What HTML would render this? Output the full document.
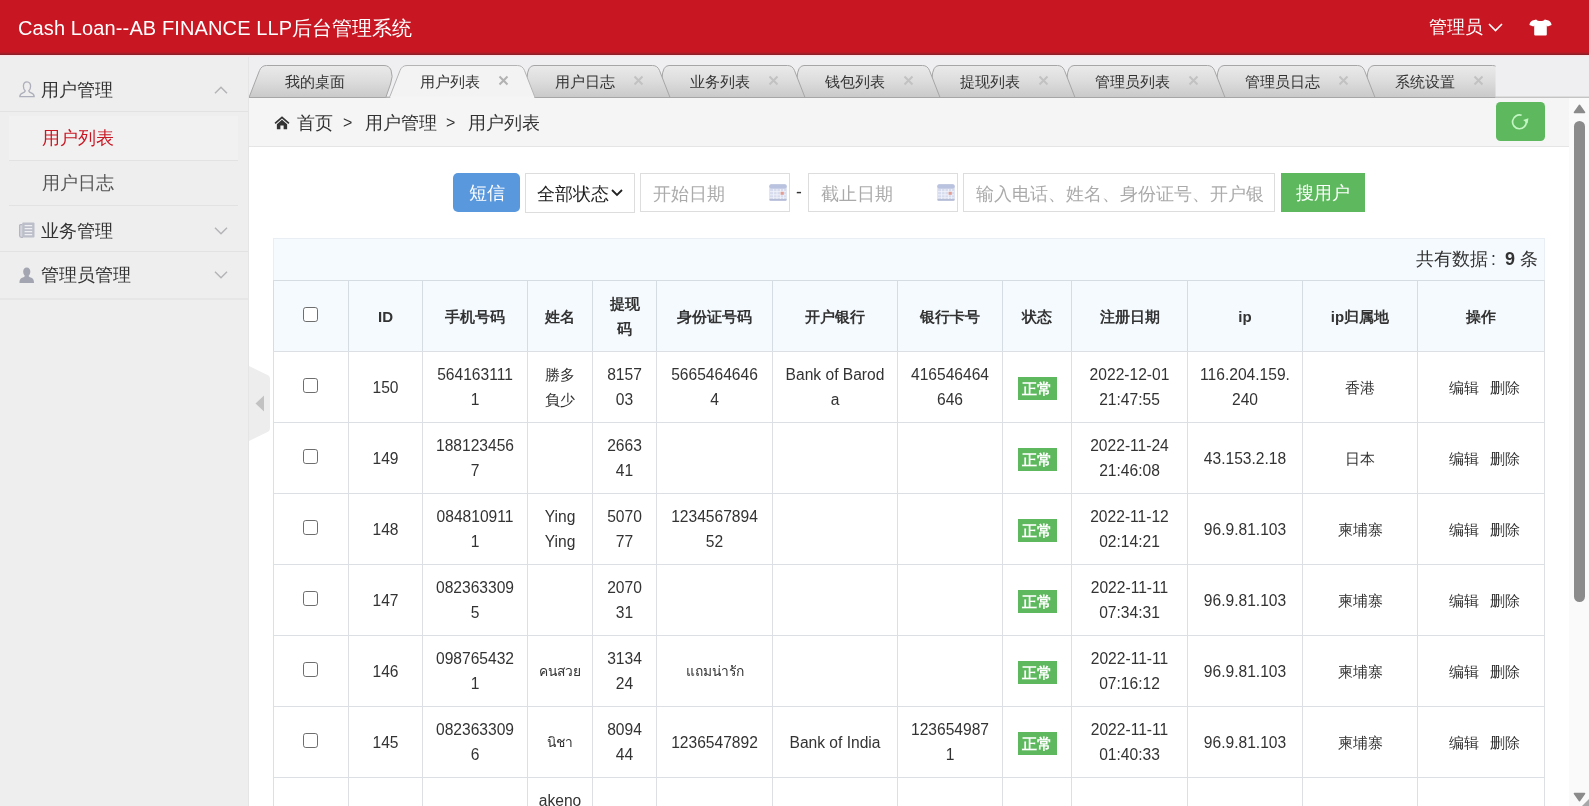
<!DOCTYPE html>
<html lang="zh">
<head>
<meta charset="utf-8">
<title>Cash Loan</title>
<style>
*{box-sizing:border-box;margin:0;padding:0}
html,body{width:1589px;height:806px;overflow:hidden;background:#fff}
body{position:relative;font-family:"Liberation Sans",sans-serif;color:#333;font-size:17.5px}
#wrap{position:absolute;left:0;top:0;width:1589px;height:806px;overflow:hidden;will-change:transform}
#hdr{position:absolute;left:0;top:0;width:1589px;height:55px;background:linear-gradient(#c81623 0,#c81623 52px,#b91a25 52px,#b91a25 53px,#a51d27 53px,#a51d27 54px,#8c1f27 54px,#8c1f27 55px);color:#fff}
#pink{position:absolute;left:0;top:55px;width:1589px;height:2px;background:linear-gradient(#fde0e3 0,#fde0e3 1px,#f4e9ec 1px,#f4e9ec 2px);z-index:5}
#hdr .logo{position:absolute;left:18px;top:1px;height:54px;line-height:54px;font-size:20px;white-space:nowrap}
#hdr .adm{position:absolute;left:1429px;top:1px;height:54px;line-height:53px;font-size:17.5px;white-space:nowrap}
#hdr svg{position:absolute}
#aside{position:absolute;left:0;top:55px;width:249px;height:751px;background:#eeeeee;border-right:1px solid #e5e5e5}
#aside .dt{position:absolute;left:0;width:248px;height:45px;border-bottom:1px solid #e2e2e2;font-size:17.5px;color:#333}
#aside .dt span{position:absolute;left:41px;top:1px;line-height:44px;white-space:nowrap}
#aside .dt svg{position:absolute}
#aside .li{position:absolute;left:9px;width:229px;height:45px;border-bottom:1px solid #e2e2e2;font-size:17.5px;color:#555}
#aside .li span{position:absolute;left:33px;top:0;line-height:44px;white-space:nowrap}
#tabs{position:absolute;left:249px;top:55px;width:1340px;height:43px;background:#efeef0;overflow:hidden}
#tabs svg{position:absolute;left:0;top:0}
#tabs .t{position:absolute;top:11px;height:31px;line-height:31px;font-size:15px;color:#333;white-space:nowrap;text-align:center;width:70px}
#tabs .x{position:absolute;top:20px;width:11px;height:11px}
#crumb{position:absolute;left:249px;top:98px;width:1320px;height:49px;background:#f5f5f5;border-bottom:1px solid #e5e5e5}
#crumb span{position:absolute;top:0;line-height:50px;font-size:17.5px;color:#333;white-space:nowrap}
#refresh{position:absolute;left:1496px;top:102px;width:49px;height:39px;background:#5eb95e;border-radius:4.5px}
#main{position:absolute;left:249px;top:148px;width:1324px;height:658px;background:#fff;overflow:hidden}
.btn{position:absolute;color:#fff;font-size:17.5px;text-align:center;white-space:nowrap}
.inp{position:absolute;border:1px solid #ddd;background:#fff;font-size:17.5px;color:#aaa;white-space:nowrap;overflow:hidden}
.inp span{position:absolute;left:12px;top:2px;line-height:37px}
#info{position:absolute;left:273px;top:238px;width:1272px;height:43px;background:#f5fafe;border:1px solid #e8eef3}
#info span{position:absolute;right:6px;top:0;line-height:41px;font-size:17.5px;color:#333;white-space:nowrap}
table{position:absolute;left:273px;top:280px;width:1272px;table-layout:fixed;border-collapse:separate;border-spacing:0;border-right:1px solid #dcdfe3;font-size:15px;color:#333}
th,td{border-left:1px solid #dcdfe3;border-top:1px solid #dcdfe3;height:71px;padding:0;text-align:center;vertical-align:middle;line-height:25px;white-space:nowrap;overflow:hidden}
th{background:#f5fafe;font-weight:bold;border-color:#d5dde3}
td{font-size:15.6px}
td.c{font-size:15px}
.thai{font-size:13.8px}
.cb{display:inline-block;width:15px;height:15px;border:1.4px solid #6e6e6e;border-radius:2.8px;background:#fff;vertical-align:middle;position:relative;top:-3px;left:-1px}
.ok{display:inline-block;width:39px;height:23px;line-height:23px;background:#5eb95e;color:#fff;font-weight:bold;font-size:15px;position:relative;top:1px}
.op{word-spacing:6.5px;padding-left:7px;font-size:15px}
#sb{position:absolute;left:1569px;top:98px;width:20px;height:708px;background:#fafafa}
#sb .th{position:absolute;left:5px;top:23px;width:11px;height:481px;border-radius:5.5px;background:#8b8b8b}
#handle{position:absolute;left:249px;top:366px}
</style>
</head>
<body>
<div id="wrap">
<div id="hdr">
  <div class="logo"><span style="letter-spacing:0.12px">Cash Loan--AB FINANCE LLP</span>后台管理系统</div>
  <div class="adm">管理员</div>
  <svg style="left:1488px;top:23px" width="15" height="9" viewBox="0 0 15 9"><path d="M1 1 L7.5 7.5 L14 1" fill="none" stroke="#fff" stroke-width="1.6"/></svg>
  <svg style="left:1529px;top:19px" width="23" height="17" viewBox="0 0 23 17"><path d="M7.2 0.6 C8.6 2.6 14.4 2.6 15.8 0.6 L19.5 1.6 C21.3 2.3 22.3 4 22.6 6 L18.6 7.6 L17.8 6.4 L17.8 15.4 Q17.8 16.4 16.8 16.4 L6.2 16.4 Q5.2 16.4 5.2 15.4 L5.2 6.4 L4.4 7.6 L0.4 6 C0.7 4 1.7 2.3 3.5 1.6 Z" fill="#fff"/></svg>
</div>
<div id="pink"></div>
<div id="aside">
  <div class="dt" style="top:12px">
    <svg style="left:19px;top:14px" width="16" height="17" viewBox="0 0 16 17"><path d="M8 0.8 C5.6 0.8 4.4 2.8 4.4 5.2 C4.4 7.2 5.2 8.8 6.2 9.8 C6 10.9 5.2 11.3 3.9 11.8 C2 12.5 0.8 13.3 0.8 15.7 L15.2 15.7 C15.2 13.3 14 12.5 12.1 11.8 C10.8 11.3 10 10.9 9.8 9.8 C10.8 8.8 11.6 7.2 11.6 5.2 C11.6 2.8 10.4 0.8 8 0.8 Z" fill="none" stroke="#adafba" stroke-width="1.3" stroke-linejoin="round"/></svg>
    <span>用户管理</span>
    <svg style="left:214px;top:19px" width="14" height="8" viewBox="0 0 14 8"><path d="M1 7.2 L7 1.2 L13 7.2" fill="none" stroke="#b4b4b8" stroke-width="1.5"/></svg>
  </div>
  <div class="li" style="top:61px;background:#f1f1f1;color:#c81623"><span>用户列表</span></div>
  <div class="li" style="top:106px"><span>用户日志</span></div>
  <div class="dt" style="top:153px;height:44px">
    <svg style="left:19px;top:14px" width="16" height="16" viewBox="0 0 16 16"><path d="M3.4 2.6 H1.6 Q0.6 2.6 0.6 3.6 V13.6 Q0.6 15.4 2.4 15.4 H4" fill="#d3d4db" stroke="#b3b5c1" stroke-width="1.2"/><rect x="3.2" y="0.5" width="12.3" height="15" rx="0.9" fill="#bcbec9"/><path d="M5.6 3.6 H13.2 M5.6 6.6 H13.2 M5.6 9.6 H13.2 M5.6 12.6 H13.2" stroke="#eeeff3" stroke-width="1.25"/></svg>
    <span>业务管理</span>
    <svg style="left:214px;top:19px" width="14" height="8" viewBox="0 0 14 8"><path d="M1 0.8 L7 6.8 L13 0.8" fill="none" stroke="#b4b4b8" stroke-width="1.5"/></svg>
  </div>
  <div class="dt" style="top:197px;height:48px;border-bottom:2px solid #e6e6e6">
    <svg style="left:19px;top:14.5px" width="15.5" height="16.5" viewBox="0 0 16 17"><path d="M8 0.5 C5.6 0.5 4.3 2.3 4.3 4.7 C4.3 6.6 5.1 8.1 6 9 C5.8 10 5.2 10.4 3.9 10.9 C2 11.6 0.5 12.4 0.5 16.5 L15.5 16.5 C15.5 12.4 14 11.6 12.1 10.9 C10.8 10.4 10.2 10 10 9 C10.9 8.1 11.7 6.6 11.7 4.7 C11.7 2.3 10.4 0.5 8 0.5 Z" fill="#a3a5b0"/></svg>
    <span>管理员管理</span>
    <svg style="left:214px;top:19px" width="14" height="8" viewBox="0 0 14 8"><path d="M1 0.8 L7 6.8 L13 0.8" fill="none" stroke="#b4b4b8" stroke-width="1.5"/></svg>
  </div>
</div>
<div id="tabs">
<svg width="1340" height="43" viewBox="0 0 1340 43"><defs><linearGradient id="tg" x1="0" y1="0" x2="0" y2="1"><stop offset="0" stop-color="#eaeaea"/><stop offset="0.5" stop-color="#dcdcdc"/><stop offset="1" stop-color="#c9c9c9"/></linearGradient><clipPath id="tc"><rect x="0" y="0" width="1246.5" height="43"/></clipPath></defs><g clip-path="url(#tc)"><rect x="0" y="41.6" width="1340" height="1.4" fill="#b5b5b5"/><path d="M1115.5 42.5 L1118.0 23.5 Q1118.5 10.5 1125.0 10.5 L1243.5 10.5 Q1248.5 10.5 1250.5 15.5 L1261.0 42.5 Z" fill="url(#tg)" stroke="#a6a6a6" stroke-width="1"/><path d="M965.5 42.5 L968.0 23.5 Q968.5 10.5 975.0 10.5 L1108.5 10.5 Q1113.5 10.5 1115.5 15.5 L1126.0 42.5 Z" fill="url(#tg)" stroke="#a6a6a6" stroke-width="1"/><path d="M815.5 42.5 L818.0 23.5 Q818.5 10.5 825.0 10.5 L958.5 10.5 Q963.5 10.5 965.5 15.5 L976.0 42.5 Z" fill="url(#tg)" stroke="#a6a6a6" stroke-width="1"/><path d="M680.5 42.5 L683.0 23.5 Q683.5 10.5 690.0 10.5 L808.5 10.5 Q813.5 10.5 815.5 15.5 L826.0 42.5 Z" fill="url(#tg)" stroke="#a6a6a6" stroke-width="1"/><path d="M545.5 42.5 L548.0 23.5 Q548.5 10.5 555.0 10.5 L673.5 10.5 Q678.5 10.5 680.5 15.5 L691.0 42.5 Z" fill="url(#tg)" stroke="#a6a6a6" stroke-width="1"/><path d="M410.5 42.5 L413.0 23.5 Q413.5 10.5 420.0 10.5 L538.5 10.5 Q543.5 10.5 545.5 15.5 L556.0 42.5 Z" fill="url(#tg)" stroke="#a6a6a6" stroke-width="1"/><path d="M275.5 42.5 L278.0 23.5 Q278.5 10.5 285.0 10.5 L403.5 10.5 Q408.5 10.5 410.5 15.5 L421.0 42.5 Z" fill="url(#tg)" stroke="#a6a6a6" stroke-width="1"/><path d="M0 42.5 L10.5 15.5 Q12.5 10.5 17.5 10.5 L135 10.5 Q140 10.5 142 15 Q144.5 21 141.5 29 L136.8 42.5 Z" fill="url(#tg)" stroke="#a6a6a6" stroke-width="1"/><path d="M140.5 42.5 L151.0 15.5 Q153.0 10.5 158.0 10.5 L268.5 10.5 Q273.5 10.5 275.5 15.5 L286.0 42.5 Z" fill="#f3f3f3" stroke="#b4b4b4" stroke-width="1"/><rect x="141.3" y="41.4" width="143.9" height="2" fill="#f5f5f5"/></g><rect x="1246.5" y="41.6" width="100" height="1.4" fill="#c4c4c4"/></svg>
<div class="t" style="left:21.0px;width:90px">我的桌面</div>
<div class="t" style="left:156.0px;width:90px">用户列表</div>
<svg class="x" style="left:248.5px" viewBox="0 0 11 11"><path d="M1.5 1.5 L9.5 9.5 M9.5 1.5 L1.5 9.5" stroke="#b2b2b2" stroke-width="2" fill="none"/></svg>
<div class="t" style="left:291.0px;width:90px">用户日志</div>
<svg class="x" style="left:383.5px" viewBox="0 0 11 11"><path d="M1.5 1.5 L9.5 9.5 M9.5 1.5 L1.5 9.5" stroke="#c2c2c2" stroke-width="2" fill="none"/></svg>
<div class="t" style="left:426.0px;width:90px">业务列表</div>
<svg class="x" style="left:518.5px" viewBox="0 0 11 11"><path d="M1.5 1.5 L9.5 9.5 M9.5 1.5 L1.5 9.5" stroke="#c2c2c2" stroke-width="2" fill="none"/></svg>
<div class="t" style="left:561.0px;width:90px">钱包列表</div>
<svg class="x" style="left:653.5px" viewBox="0 0 11 11"><path d="M1.5 1.5 L9.5 9.5 M9.5 1.5 L1.5 9.5" stroke="#c2c2c2" stroke-width="2" fill="none"/></svg>
<div class="t" style="left:696.0px;width:90px">提现列表</div>
<svg class="x" style="left:788.5px" viewBox="0 0 11 11"><path d="M1.5 1.5 L9.5 9.5 M9.5 1.5 L1.5 9.5" stroke="#c2c2c2" stroke-width="2" fill="none"/></svg>
<div class="t" style="left:838.5px;width:90px">管理员列表</div>
<svg class="x" style="left:938.5px" viewBox="0 0 11 11"><path d="M1.5 1.5 L9.5 9.5 M9.5 1.5 L1.5 9.5" stroke="#c2c2c2" stroke-width="2" fill="none"/></svg>
<div class="t" style="left:988.5px;width:90px">管理员日志</div>
<svg class="x" style="left:1088.5px" viewBox="0 0 11 11"><path d="M1.5 1.5 L9.5 9.5 M9.5 1.5 L1.5 9.5" stroke="#c2c2c2" stroke-width="2" fill="none"/></svg>
<div class="t" style="left:1131.0px;width:90px">系统设置</div>
<svg class="x" style="left:1223.5px" viewBox="0 0 11 11"><path d="M1.5 1.5 L9.5 9.5 M9.5 1.5 L1.5 9.5" stroke="#c2c2c2" stroke-width="2" fill="none"/></svg>
</div>
<div id="crumb">
  <svg style="position:absolute;left:25px;top:18px" width="16" height="13.5" viewBox="0 0 17 15"><path d="M8.5 0.3 L16.8 7.6 L15.6 8.9 L8.5 2.8 L1.4 8.9 L0.2 7.6 Z" fill="#333"/><path d="M8.5 4.2 L14.2 9.1 V14.6 H10.3 V10.6 H6.7 V14.6 H2.8 V9.1 Z" fill="#333"/></svg>
  <span style="left:47.5px">首页</span>
  <span style="left:94px;font-size:16px">&gt;</span>
  <span style="left:115.5px">用户管理</span>
  <span style="left:197px;font-size:16px">&gt;</span>
  <span style="left:218.5px">用户列表</span>
</div>
<div id="refresh"><svg style="position:absolute;left:14px;top:10px" width="20" height="20" viewBox="0 0 20 20"><path d="M16.3 9.2 A6.9 6.9 0 1 1 11.6 3.3" fill="none" stroke="#c4f6c4" stroke-width="1.7"/><path d="M13.2 8.1 L18.4 6.2 L17.6 11.6 Z" fill="#c4f6c4"/></svg></div>
<div id="main"></div>
<div class="btn" style="left:453px;top:173px;width:67px;height:39px;line-height:40px;background:#5a98de;border-radius:5px">短信</div>
<div class="inp" style="left:525px;top:173px;width:110px;height:40px;color:#222"><span style="left:11px">全部状态</span><svg style="position:absolute;left:85px;top:15px" width="12" height="8" viewBox="0 0 12 8"><path d="M1 1 L6 6 L11 1" fill="none" stroke="#222" stroke-width="1.8"/></svg></div>
<div class="inp" style="left:640px;top:173px;width:150px;height:39px"><span>开始日期</span><svg style="position:absolute;left:128px;top:10px" width="18" height="17" viewBox="0 0 18 17"><rect x="0.3" y="0.3" width="17.4" height="16.4" rx="2" fill="#d6dbed"/><rect x="0.3" y="0.3" width="17.4" height="4.2" rx="2" fill="#b9c2de"/><rect x="0.3" y="14.8" width="17.4" height="1.9" rx="1" fill="#b4bcd6"/><path d="M1 7.6 H17 M1 10.8 H17 M1 13.8 H17 M4.6 5 V15 M8 5 V15 M11.4 5 V15 M14.6 5 V15" stroke="#f1f3fa" stroke-width="0.9"/><rect x="11.6" y="7.8" width="3.2" height="3" fill="#e39c92"/></svg></div>
<div style="position:absolute;left:796px;top:174px;line-height:36px;font-size:17.5px;color:#333">-</div>
<div class="inp" style="left:808px;top:173px;width:150px;height:39px"><span>截止日期</span><svg style="position:absolute;left:128px;top:10px" width="18" height="17" viewBox="0 0 18 17"><rect x="0.3" y="0.3" width="17.4" height="16.4" rx="2" fill="#d6dbed"/><rect x="0.3" y="0.3" width="17.4" height="4.2" rx="2" fill="#b9c2de"/><rect x="0.3" y="14.8" width="17.4" height="1.9" rx="1" fill="#b4bcd6"/><path d="M1 7.6 H17 M1 10.8 H17 M1 13.8 H17 M4.6 5 V15 M8 5 V15 M11.4 5 V15 M14.6 5 V15" stroke="#f1f3fa" stroke-width="0.9"/><rect x="11.6" y="7.8" width="3.2" height="3" fill="#e39c92"/></svg></div>
<div class="inp" style="left:963px;top:173px;width:312px;height:39px"><span style="width:287px;overflow:hidden">输入电话、姓名、身份证号、开户银行</span></div>
<div class="btn" style="left:1281px;top:173px;width:84px;height:39px;line-height:40px;background:#5eb95e">搜用户</div>
<div id="info"><span>共有数据<i style="display:inline-block;width:17px;font-style:normal;padding-left:3px">:</i><b style="font-size:18px">9</b> 条</span></div>
<table>
<colgroup><col style="width:75px"><col style="width:74px"><col style="width:105px"><col style="width:65px"><col style="width:64px"><col style="width:116px"><col style="width:125px"><col style="width:105px"><col style="width:69px"><col style="width:116px"><col style="width:115px"><col style="width:115px"><col style="width:127px"></colgroup>
<tr><th><i class="cb"></i></th><th>ID</th><th>手机号码</th><th>姓名</th><th>提现<br>码</th><th>身份证号码</th><th>开户银行</th><th>银行卡号</th><th>状态</th><th>注册日期</th><th>ip</th><th>ip归属地</th><th>操作</th></tr>
<tr><td><i class="cb"></i></td><td>150</td><td>564163111<br>1</td><td class="c">勝多<br>負少</td><td>8157<br>03</td><td>5665464646<br>4</td><td>Bank of Barod<br>a</td><td>416546464<br>646</td><td><span class="ok">正常</span></td><td>2022-12-01<br>21:47:55</td><td>116.204.159.<br>240</td><td class="c">香港</td><td class="op">编辑 删除</td></tr>
<tr><td><i class="cb"></i></td><td>149</td><td>188123456<br>7</td><td></td><td>2663<br>41</td><td></td><td></td><td></td><td><span class="ok">正常</span></td><td>2022-11-24<br>21:46:08</td><td>43.153.2.18</td><td class="c">日本</td><td class="op">编辑 删除</td></tr>
<tr><td><i class="cb"></i></td><td>148</td><td>084810911<br>1</td><td>Ying<br>Ying</td><td>5070<br>77</td><td>1234567894<br>52</td><td></td><td></td><td><span class="ok">正常</span></td><td>2022-11-12<br>02:14:21</td><td>96.9.81.103</td><td class="c">柬埔寨</td><td class="op">编辑 删除</td></tr>
<tr><td><i class="cb"></i></td><td>147</td><td>082363309<br>5</td><td></td><td>2070<br>31</td><td></td><td></td><td></td><td><span class="ok">正常</span></td><td>2022-11-11<br>07:34:31</td><td>96.9.81.103</td><td class="c">柬埔寨</td><td class="op">编辑 删除</td></tr>
<tr><td><i class="cb"></i></td><td>146</td><td>098765432<br>1</td><td><span class="thai">คนสวย</span></td><td>3134<br>24</td><td><span class="thai">แถมน่ารัก</span></td><td></td><td></td><td><span class="ok">正常</span></td><td>2022-11-11<br>07:16:12</td><td>96.9.81.103</td><td class="c">柬埔寨</td><td class="op">编辑 删除</td></tr>
<tr><td><i class="cb"></i></td><td>145</td><td>082363309<br>6</td><td><span class="thai">นิชา</span></td><td>8094<br>44</td><td>1236547892</td><td>Bank of India</td><td>123654987<br>1</td><td><span class="ok">正常</span></td><td>2022-11-11<br>01:40:33</td><td>96.9.81.103</td><td class="c">柬埔寨</td><td class="op">编辑 删除</td></tr>
<tr><td></td><td></td><td></td><td style="vertical-align:top"><div style="padding-top:10px">akeno</div></td><td></td><td></td><td></td><td></td><td></td><td></td><td></td><td></td><td></td></tr>
</table>
<div id="sb"><div class="th"></div>
<svg style="position:absolute;left:4px;top:6px" width="13" height="10" viewBox="0 0 13 10"><path d="M6.5 1.2 L11.6 8.5 H1.4 Z" fill="#8b8b8b" stroke="#8b8b8b" stroke-width="1.4" stroke-linejoin="round"/></svg>
<svg style="position:absolute;left:4px;top:693.5px" width="13" height="10" viewBox="0 0 13 10"><path d="M6.5 8.8 L11.6 1.5 H1.4 Z" fill="#8b8b8b" stroke="#8b8b8b" stroke-width="1.4" stroke-linejoin="round"/></svg><svg style="position:absolute;left:11px;top:699px" width="9" height="9" viewBox="0 0 9 9"><path d="M9 2 L2 9 H9 Z" fill="#a8a8a8"/></svg>
</div>
<svg id="handle" width="22" height="75" viewBox="0 0 22 75"><path d="M0 0 L19.5 9.5 Q21 10.5 21 13 V62 Q21 64.5 19.5 65.5 L0 75 Z" fill="#ededed"/><path d="M15 29.5 V45.5 L6.5 37.5 Z" fill="#c2c2c2"/></svg>
</div>
</body>
</html>
